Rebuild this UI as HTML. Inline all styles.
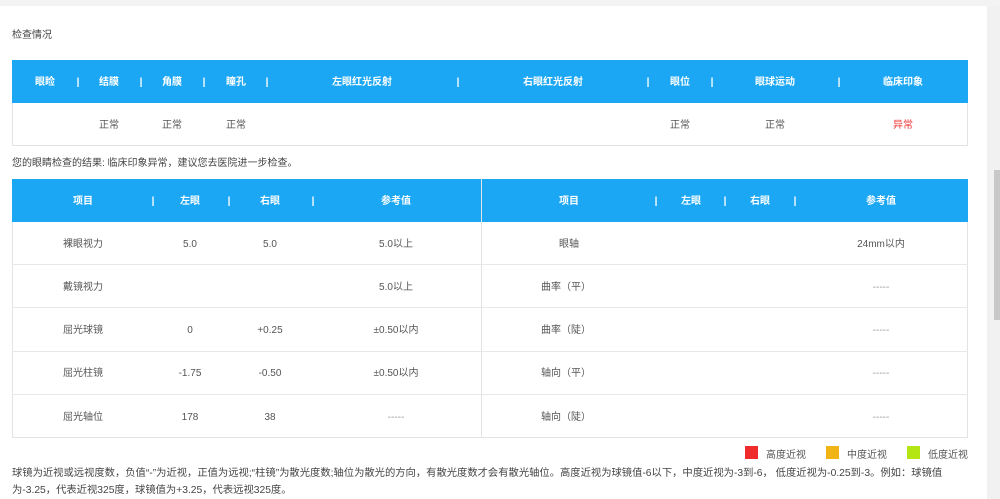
<!DOCTYPE html>
<html><head><meta charset="utf-8"><style>
*{margin:0;padding:0;box-sizing:border-box}
body{width:1000px;height:499px;overflow:hidden;background:#fff;font-family:"Liberation Sans","Noto Sans CJK SC",sans-serif;font-size:10px;color:#555;position:relative}
.a{position:absolute;white-space:nowrap}
.c{position:absolute;white-space:nowrap;transform:translateX(-50%);line-height:14px;height:14px;margin-top:-5px}
.h{color:#fff;font-weight:bold}
.box{position:absolute;border:1px solid #e3e3e3}
.bar{position:absolute;background:#1ba7f3}
.line{position:absolute;background:#e8e8e8}
</style></head><body>
<div class="a" style="left:0;top:0;width:1000px;height:6px;background:#f3f3f3"></div>
<div class="a" style="left:987px;top:6px;width:13px;height:493px;background:#f1f1f1"></div>
<div class="a" style="left:994px;top:170px;width:6px;height:150px;background:#c8c8c8"></div>
<div class="a" style="left:12px;top:26px;color:#444">检查情况</div>

<div class="box" style="left:12px;top:60px;width:956px;height:86px"></div>
<div class="bar" style="left:12px;top:60px;width:956px;height:43px"></div>
<div class="c h" style="left:45px;top:81px">眼睑</div>
<div class="c h" style="left:109px;top:81px">结膜</div>
<div class="c h" style="left:172px;top:81px">角膜</div>
<div class="c h" style="left:236px;top:81px">瞳孔</div>
<div class="c h" style="left:362px;top:81px">左眼红光反射</div>
<div class="c h" style="left:553px;top:81px">右眼红光反射</div>
<div class="c h" style="left:680px;top:81px">眼位</div>
<div class="c h" style="left:775px;top:81px">眼球运动</div>
<div class="c h" style="left:903px;top:81px">临床印象</div>
<div class="c h" style="left:78px;top:81px">|</div><div class="c h" style="left:141px;top:81px">|</div><div class="c h" style="left:204px;top:81px">|</div><div class="c h" style="left:267px;top:81px">|</div><div class="c h" style="left:458px;top:81px">|</div><div class="c h" style="left:648px;top:81px">|</div><div class="c h" style="left:712px;top:81px">|</div><div class="c h" style="left:839px;top:81px">|</div>
<div class="c" style="left:109px;top:124px">正常</div>
<div class="c" style="left:172px;top:124px">正常</div>
<div class="c" style="left:236px;top:124px">正常</div>
<div class="c" style="left:680px;top:124px">正常</div>
<div class="c" style="left:775px;top:124px">正常</div>
<div class="c" style="left:903px;top:124px;color:#e33">异常</div>

<div class="a" style="left:12px;top:154px;color:#444">您的眼睛检查的结果: 临床印象异常，建议您去医院进一步检查。</div>

<div class="box" style="left:12px;top:179px;width:956px;height:259px"></div>
<div class="bar" style="left:12px;top:179px;width:956px;height:43px"></div>
<div class="line" style="left:481px;top:179px;width:1px;height:259px;background:#e3e3e3"></div>
<div class="line" style="left:12px;top:264px;width:956px;height:1px"></div>
<div class="line" style="left:12px;top:307px;width:956px;height:1px"></div>
<div class="line" style="left:12px;top:351px;width:956px;height:1px"></div>
<div class="line" style="left:12px;top:394px;width:956px;height:1px"></div>
<div class="c h" style="left:83px;top:200px">项目</div><div class="c h" style="left:153px;top:200px">|</div>
<div class="c h" style="left:190px;top:200px">左眼</div><div class="c h" style="left:229px;top:200px">|</div>
<div class="c h" style="left:270px;top:200px">右眼</div><div class="c h" style="left:313px;top:200px">|</div>
<div class="c h" style="left:396px;top:200px">参考值</div>
<div class="c h" style="left:569px;top:200px">项目</div><div class="c h" style="left:656px;top:200px">|</div>
<div class="c h" style="left:691px;top:200px">左眼</div><div class="c h" style="left:725px;top:200px">|</div>
<div class="c h" style="left:760px;top:200px">右眼</div><div class="c h" style="left:795px;top:200px">|</div>
<div class="c h" style="left:881px;top:200px">参考值</div>

<div class="c" style="left:83px;top:243px">裸眼视力</div><div class="c" style="left:190px;top:243px">5.0</div><div class="c" style="left:270px;top:243px">5.0</div><div class="c" style="left:396px;top:243px">5.0以上</div>
<div class="c" style="left:83px;top:286px">戴镜视力</div><div class="c" style="left:396px;top:286px">5.0以上</div>
<div class="c" style="left:83px;top:329px">屈光球镜</div><div class="c" style="left:190px;top:329px">0</div><div class="c" style="left:270px;top:329px">+0.25</div><div class="c" style="left:396px;top:329px">±0.50以内</div>
<div class="c" style="left:83px;top:372px">屈光柱镜</div><div class="c" style="left:190px;top:372px">-1.75</div><div class="c" style="left:270px;top:372px">-0.50</div><div class="c" style="left:396px;top:372px">±0.50以内</div>
<div class="c" style="left:83px;top:416px">屈光轴位</div><div class="c" style="left:190px;top:416px">178</div><div class="c" style="left:270px;top:416px">38</div><div class="c" style="left:396px;top:416px;color:#999">-----</div>

<div class="c" style="left:569px;top:243px">眼轴</div><div class="c" style="left:881px;top:243px">24mm以内</div>
<div class="c" style="left:566px;top:286px">曲率（平）</div><div class="c" style="left:881px;top:286px;color:#999">-----</div>
<div class="c" style="left:566px;top:329px">曲率（陡）</div><div class="c" style="left:881px;top:329px;color:#999">-----</div>
<div class="c" style="left:566px;top:372px">轴向（平）</div><div class="c" style="left:881px;top:372px;color:#999">-----</div>
<div class="c" style="left:566px;top:416px">轴向（陡）</div><div class="c" style="left:881px;top:416px;color:#999">-----</div>

<div class="a" style="left:745px;top:446px;width:13px;height:13px;background:#f02b2b"></div>
<div class="a" style="left:766px;top:446px">高度近视</div>
<div class="a" style="left:826px;top:446px;width:13px;height:13px;background:#f0b414"></div>
<div class="a" style="left:847px;top:446px">中度近视</div>
<div class="a" style="left:907px;top:446px;width:13px;height:13px;background:#b4e614"></div>
<div class="a" style="left:928px;top:446px">低度近视</div>

<div class="a" style="left:12px;top:465px;color:#444;line-height:17px;font-size:10.3px">球镜为近视或远视度数，负值“-”为近视，正值为远视;“柱镜”为散光度数;轴位为散光的方向，有散光度数才会有散光轴位。高度近视为球镜值-6以下，中度近视为-3到-6， 低度近视为-0.25到-3。例如：球镜值<br>为-3.25，代表近视325度，球镜值为+3.25，代表远视325度。</div>
</body></html>
